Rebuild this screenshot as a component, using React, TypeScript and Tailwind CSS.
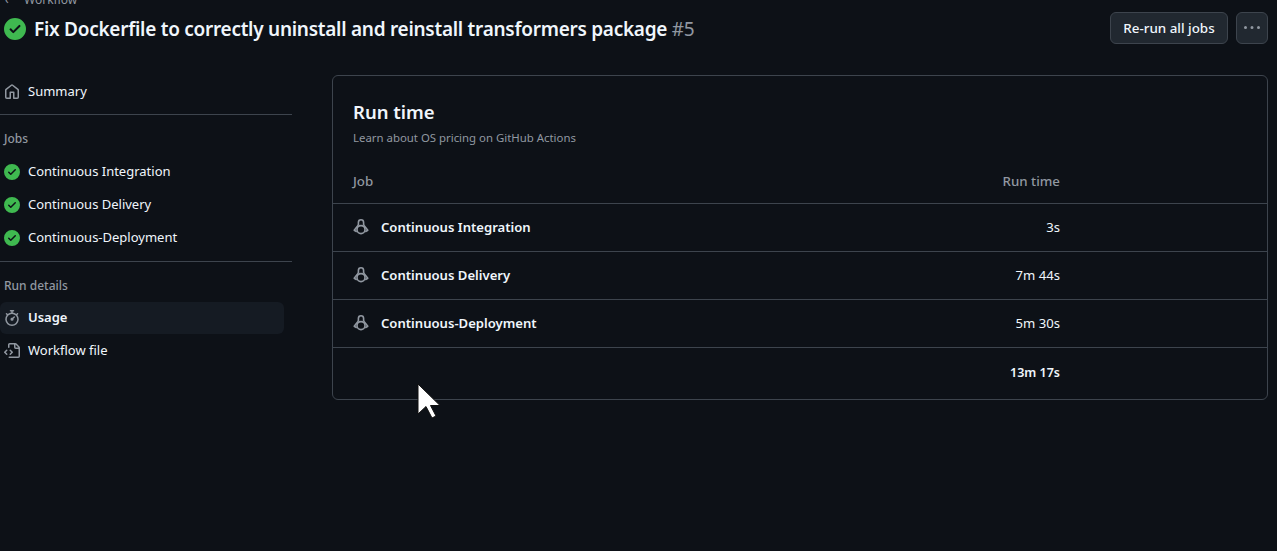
const CHECK = "M8 16A8 8 0 1 1 8 0a8 8 0 0 1 0 16Zm3.78-9.72a.751.751 0 0 0-.018-1.042.751.751 0 0 0-1.042-.018L6.75 9.19 5.28 7.72a.751.751 0 0 0-1.042.018.751.751 0 0 0-.018 1.042l2 2a.75.75 0 0 0 1.06 0Z";
const HOME = "M6.906.664a1.749 1.749 0 0 1 2.187 0l5.25 4.2c.415.332.657.835.657 1.367v7.019A1.75 1.75 0 0 1 13.25 15h-3.5a.75.75 0 0 1-.75-.75V9H7v5.25a.75.75 0 0 1-.75.75h-3.5A1.75 1.75 0 0 1 1 13.25V6.23c0-.531.242-1.034.657-1.366l5.25-4.2Zm1.25 1.171a.25.25 0 0 0-.312 0l-5.25 4.2a.25.25 0 0 0-.094.196v7.019c0 .138.112.25.25.25H5.5V8.25a.75.75 0 0 1 .75-.75h3.5a.75.75 0 0 1 .75.75v5.25h2.75a.25.25 0 0 0 .25-.25V6.23a.25.25 0 0 0-.094-.195Z";
const STOPWATCH = "M5.75.75A.75.75 0 0 1 6.5 0h3a.75.75 0 0 1 0 1.5h-.75v1l-.001.041a6.724 6.724 0 0 1 3.464 1.435l.007-.006.75-.75a.749.749 0 0 1 1.275.326.749.749 0 0 1-.215.734l-.75.75-.006.007a6.75 6.75 0 1 1-10.548 0L2.72 5.03l-.75-.75a.751.751 0 0 1 .018-1.042.751.751 0 0 1 1.042-.018l.75.75.007.006A6.72 6.72 0 0 1 7.25 2.541V1.5H6.5a.75.75 0 0 1-.75-.75ZM8 14.5a5.25 5.25 0 1 0-.001-10.501A5.25 5.25 0 0 0 8 14.5Zm.389-6.7 1.33-1.33a.75.75 0 1 1 1.061 1.06L9.45 8.861A1.503 1.503 0 0 1 8 10.75a1.499 1.499 0 1 1 .389-2.95Z";
const FILE_CODE = "M4 1.75C4 .784 4.784 0 5.75 0h5.586c.464 0 .909.184 1.237.513l2.914 2.914c.329.328.513.773.513 1.237v8.586A1.75 1.75 0 0 1 14.25 15h-9a.75.75 0 0 1 0-1.5h9a.25.25 0 0 0 .25-.25V6h-2.75A1.75 1.75 0 0 1 10 4.25V1.5H5.75a.25.25 0 0 0-.25.25v2.5a.75.75 0 0 1-1.5 0Zm1.72 4.97a.75.75 0 0 1 1.06 0l2 2a.75.75 0 0 1 0 1.06l-2 2a.749.749 0 0 1-1.275-.326.749.749 0 0 1 .215-.734l1.47-1.47-1.47-1.47a.75.75 0 0 1 0-1.06ZM3.28 7.78 1.81 9.25l1.47 1.47a.751.751 0 0 1-.018 1.042.751.751 0 0 1-1.042.018l-2-2a.75.75 0 0 1 0-1.06l2-2a.751.751 0 0 1 1.042.018.751.751 0 0 1 .018 1.042Zm8.22-6.218V4.25c0 .138.112.25.25.25h2.688l-.011-.013-2.914-2.914-.013-.011Z";
const KEBAB = "M8 9a1.5 1.5 0 1 0 0-3 1.5 1.5 0 0 0 0 3ZM1.5 9a1.5 1.5 0 1 0 0-3 1.5 1.5 0 0 0 0 3Zm13 0a1.5 1.5 0 1 0 0-3 1.5 1.5 0 0 0 0 3Z";

function Octicon({ d, className }: { d: string; className: string }) {
  return (
    <svg viewBox="0 0 16 16" fill="currentColor" className={className}>
      <path fillRule="evenodd" d={d} />
    </svg>
  );
}

// linux penguin: dome head, flared flippers, round belly
function Penguin() {
  return (
    <svg viewBox="0 0 16 16" fill="none" stroke="currentColor" strokeWidth="1.6" strokeLinejoin="round" className="h-4 w-4 shrink-0 text-[#9198a1]">
      <path d="M5.4 6V3.4a2.6 2.6 0 0 1 5.2 0V6" />
      <path d="M5.4 6 1.2 11.2l2.6 1.6M10.6 6l4.2 5.2-2.6 1.6" />
      <circle cx="8" cy="10.6" r="4" />
    </svg>
  );
}

const jobs = ["Continuous Integration", "Continuous Delivery", "Continuous-Deployment"];
const usage = [
  { name: "Continuous Integration", time: "3s" },
  { name: "Continuous Delivery", time: "7m 44s" },
  { name: "Continuous-Deployment", time: "5m 30s" },
];

export default function App() {
  return (
    <div className="relative h-[551px] w-full overflow-hidden bg-[#0d1117] font-['Noto_Sans',sans-serif] text-[#f0f6fc]">
      <header className="flex h-[75px] items-start pr-[9px] pl-1">
        <div className="min-w-0 flex-1">
          <div className="-mt-[7px] flex h-[14px] items-center pl-[1px] text-[12px] leading-none text-[#9198a1]">
            <span className="w-[19px]">‹</span>
            <span>Workflow</span>
          </div>
          <div className="mt-[9px] flex items-center gap-2">
            <Octicon d={CHECK} className="h-[22px] w-[22px] text-[#3fb950]" />
            <h1 className="text-[19px] leading-[26px] font-semibold tracking-[-0.27px] whitespace-nowrap">
              Fix Dockerfile to correctly uninstall and reinstall transformers package{" "}
              <span className="font-normal text-[#9198a1]">#5</span>
            </h1>
          </div>
        </div>
        <div className="mt-3 flex gap-2">
          <button className="h-8 w-[118px] rounded-md border border-[#3d444d] bg-[#212830] text-[13.4px] font-medium">Re-run all jobs</button>
          <button className="flex h-8 w-8 items-center justify-center rounded-md border border-[#3d444d] bg-[#212830] text-[#9198a1]">
            <Octicon d={KEBAB} className="h-4 w-4" />
          </button>
        </div>
      </header>

      <div className="flex gap-10 pr-[9px]">
        <aside className="w-[292px] shrink-0 text-[13px]">
          <div className="flex h-[33px] items-center gap-2 pl-1">
            <Octicon d={HOME} className="h-4 w-4 text-[#9198a1]" />
            <span>Summary</span>
          </div>
          <div className="mt-[6px] border-t border-[#3d444d]" />
          <div className="mt-[15px] mb-[7px] pl-1 text-[12px] leading-[18px] font-medium text-[#9198a1]">Jobs</div>
          {jobs.map((job) => (
            <div key={job} className="flex h-[33px] items-center gap-2 pl-1">
              <Octicon d={CHECK} className="h-4 w-4 text-[#3fb950]" />
              <span>{job}</span>
            </div>
          ))}
          <div className="mt-[7px] border-t border-[#3d444d]" />
          <div className="mt-[15px] mb-[7px] pl-1 text-[12px] leading-[18px] font-medium text-[#9198a1]">Run details</div>
          <div className="flex h-8 w-[284px] items-center gap-2 rounded-md bg-[#151b23] pl-1 font-semibold">
            <Octicon d={STOPWATCH} className="h-4 w-4 text-[#9198a1]" />
            <span>Usage</span>
          </div>
          <div className="mt-[1px] flex h-8 items-center gap-2 pl-1">
            <Octicon d={FILE_CODE} className="h-4 w-4 text-[#9198a1]" />
            <span>Workflow file</span>
          </div>
        </aside>

        <main className="min-w-0 flex-1">
          <section className="rounded-md border border-[#3d444d]">
            <div className="px-5 pt-[23px]">
              <h2 className="text-[18.5px] leading-[26px] font-semibold">Run time</h2>
              <p className="mt-[4px] text-[11.4px] leading-[18px] text-[#9198a1]">Learn about OS pricing on GitHub Actions</p>
            </div>
            <div className="flex h-[56px] items-center justify-between pt-[14px] pr-[207px] pl-5 text-[13.3px] font-medium text-[#9198a1]">
              <span>Job</span>
              <span>Run time</span>
            </div>
            {usage.map((row) => (
              <div key={row.name} className="flex h-12 items-center justify-between border-t border-[#3d444d] pr-[207px] pl-5 text-[13.1px]">
                <div className="flex items-center gap-3 font-semibold">
                  <Penguin />
                  <span>{row.name}</span>
                </div>
                <span>{row.time}</span>
              </div>
            ))}
            <div className="flex h-[52px] items-center justify-end border-t border-[#3d444d] pr-[207px] pb-[1px] text-[12.5px] font-semibold">
              13m 17s
            </div>
          </section>
        </main>
      </div>

      <svg viewBox="0 0 24 38" className="absolute top-[383px] left-[417px] h-[38px] w-[24px]">
        <path d="M1 1 L1 31 L9 23.5 L15 35 L19 33 L13.5 22.5 L23 22.5 Z" fill="#fff" stroke="#111" strokeWidth="1" />
      </svg>
    </div>
  );
}
